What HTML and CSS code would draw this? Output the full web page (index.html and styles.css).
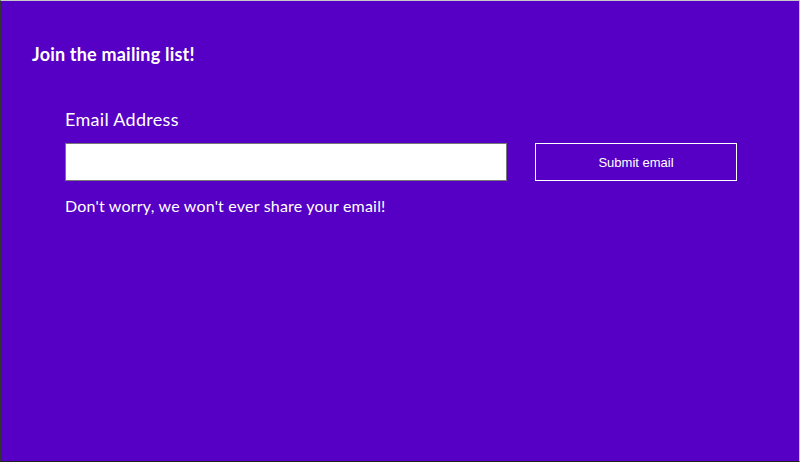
FILE: index.html
```html
<!DOCTYPE html>
<html>
<head>
<meta charset="utf-8">
<link rel="stylesheet" href="styles.css">
</head>
<body>
<div class="page">
  <h2 class="title">Join the mailing list!</h2>
  <form class="signup">
    <label class="label" for="email">Email Address</label>
    <div class="row">
      <input class="input" id="email" type="email">
      <button class="submit" type="button">Submit email</button>
    </div>
    <p class="help">Don't worry, we won't ever share your email!</p>
  </form>
</div>
</body>
</html>
```

FILE: styles.css
```css
html, body {
  margin: 0;
  padding: 0;
  height: 100%;
}
.page {
  box-sizing: border-box;
  height: 462px;
  width: 800px;
  background: #5500c4;
  border-top: 1px solid #c8c8c8;
  border-left: 1px solid #333;
  border-right: 1px solid #c8c8c8;
  border-bottom: 1px solid #222;
  padding: 42px 0 0 31px;
  color: #fff;
  font-family: "Lato", "Noto Sans", sans-serif;
}
.title {
  margin: 0;
  font-size: 18px;
  font-weight: 700;
  line-height: 22px;
  letter-spacing: 0.2px;
}
.signup {
  margin: 42px 0 0 33px;
  width: 672px;
}
.label {
  display: block;
  font-size: 18px;
  line-height: 24px;
  letter-spacing: 0.3px;
}
.row {
  display: flex;
  gap: 28px;
  margin-top: 12px;
}
.input {
  box-sizing: border-box;
  width: 442px;
  height: 38px;
  margin: 0;
  border: 1px solid #767676;
  background: #fff;
  padding: 0 8px;
}
.submit {
  box-sizing: border-box;
  width: 202px;
  height: 38px;
  margin: 0;
  background: transparent;
  border: 1px solid #fff;
  color: #fff;
  font-family: "Liberation Sans", Arial, sans-serif;
  font-size: 13px;
}
.help {
  margin: 14px 0 0;
  font-size: 16px;
  line-height: 22px;
  letter-spacing: 0.2px;
}
```
